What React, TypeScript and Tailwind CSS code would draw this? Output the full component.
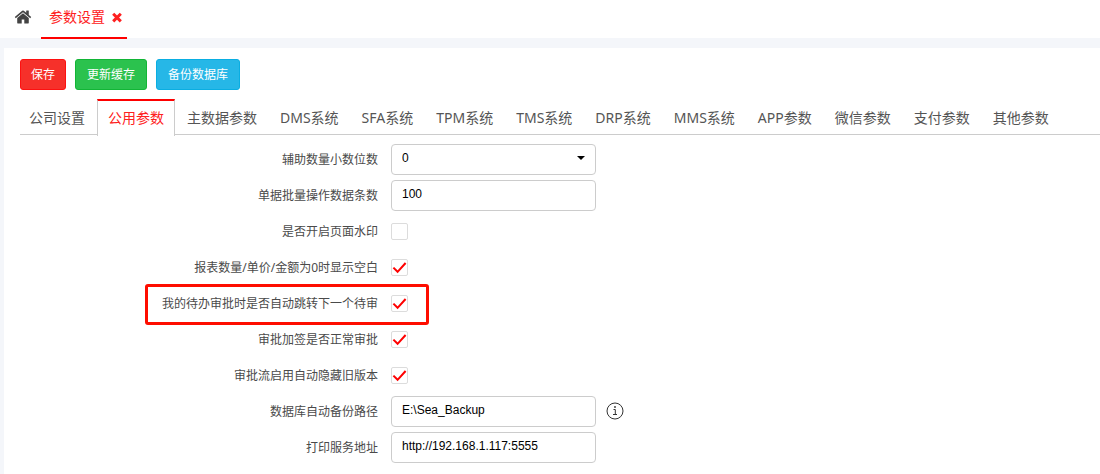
import { useState } from "react";
import type { ReactNode } from "react";

const tabs = [
  "公司设置",
  "公用参数",
  "主数据参数",
  "DMS系统",
  "SFA系统",
  "TPM系统",
  "TMS系统",
  "DRP系统",
  "MMS系统",
  "APP参数",
  "微信参数",
  "支付参数",
  "其他参数",
];

const switches = [
  { id: "watermark", label: "是否开启页面水印", checked: false },
  { id: "blank-zero", label: "报表数量/单价/金额为0时显示空白", checked: true },
  { id: "auto-next", label: "我的待办审批时是否自动跳转下一个待审", checked: true, highlight: true },
  { id: "countersign", label: "审批加签是否正常审批", checked: true },
  { id: "hide-old", label: "审批流启用自动隐藏旧版本", checked: true },
];

const fieldClass =
  "h-[31px] w-[205px] appearance-none rounded-[4px] border border-[#ccc] bg-white pl-[10px] pr-6 pb-[3px] font-['Liberation_Sans',Arial,sans-serif] text-xs text-black outline-none focus:border-[#fe0000]";

const HomeIcon = () => (
  <svg className="h-[18px] w-[18px]" viewBox="0 0 1792 1792" fill="currentColor" aria-hidden="true">
    <path d="M1472 992v480q0 26-19 45t-45 19h-384v-384h-256v384h-384q-26 0-45-19t-19-45v-480q0-1 .5-3t.5-3l575-474 575 474q1 2 1 6zm223-69l-62 74q-8 9-21 11h-3q-13 0-21-7l-692-577-692 577q-12 8-24 7-13-2-21-11l-62-74q-8-10-7-23.5t11-21.5l719-599q32-26 76-26t76 26l244 204v-195q0-14 9-23t23-9h192q14 0 23 9t9 23v408l219 182q10 8 11 21.5t-7 23.5z" />
  </svg>
);

const CloseIcon = () => (
  <svg className="h-[14px] w-[14px]" viewBox="0 0 14 14" fill="none" stroke="currentColor" strokeWidth="3" aria-hidden="true">
    <path d="M3.2 3.8l7.6 7.6M10.8 3.8l-7.6 7.6" />
  </svg>
);

const InfoIcon = () => (
  <svg className="h-[18px] w-[18px]" viewBox="0 0 18 18" fill="none" stroke="currentColor" aria-hidden="true">
    <circle cx="9" cy="9" r="8" />
    <path d="M7.5 7.5H9.3V12.5M7 12.5h4" />
    <circle cx="9" cy="5" r=".9" fill="currentColor" stroke="none" />
  </svg>
);

type RowProps = {
  id: string;
  label: string;
  highlight?: boolean;
  children: ReactNode;
};

const Row = ({ id, label, highlight, children }: RowProps) => (
  <div className="relative flex h-9 items-center">
    <label htmlFor={id} className="mr-[13px] w-[358px] shrink-0 pt-px text-right text-xs text-[#4a4a4a]">
      {label}
    </label>
    {children}
    {highlight && (
      <span className="pointer-events-none absolute -top-px left-[125px] h-[41px] w-[284px] rounded-[3px] border-[3px] border-[#fe0d00]"></span>
    )}
  </div>
);

const Checkbox = ({ id, checked }: { id: string; checked: boolean }) => (
  <span className="relative flex">
    <input
      id={id}
      type="checkbox"
      defaultChecked={checked}
      className="peer h-[17px] w-[17px] appearance-none rounded-[2px] border border-[#dcdcdc] bg-white"
    />
    <svg
      className="pointer-events-none invisible absolute inset-0 h-[17px] w-[17px] text-[#fe0000] peer-checked:visible"
      viewBox="0 0 17 17"
      fill="none"
      stroke="currentColor"
      strokeWidth="2"
      aria-hidden="true"
    >
      <path d="M2.4 8.6L6.6 12.8L14.6 4" />
    </svg>
  </span>
);

const App = () => {
  const [activeTab, setActiveTab] = useState("公用参数");

  return (
    <div className="flex min-h-screen flex-col bg-[#f4f6fa] font-['Noto_Sans','Noto_Sans_CJK_SC',sans-serif]">
      {/* Open pages */}
      <header className="flex h-[38px] items-start bg-white pl-[14px]">
        <button aria-label="首页" className="flex h-[34px] items-center text-[#444]">
          <HomeIcon />
        </button>
        <div className="ml-[9px] flex h-[39px] items-center gap-[5px] border-b-2 border-[#fe0000] pr-[3px] pb-1 pl-2 text-sm text-[#fe2020]">
          <a href="#settings">参数设置</a>
          <button aria-label="关闭">
            <CloseIcon />
          </button>
        </div>
      </header>

      <main className="mt-[10px] ml-1 flex-1 bg-white pt-[11px] pl-4">
        {/* Actions */}
        <div className="flex gap-[9px] text-xs text-white">
          <button className="h-[31px] rounded-[3px] border border-[#fe1010] bg-[#f6302a] px-[10px]">保存</button>
          <button className="h-[31px] rounded-[3px] border border-[#12b536] bg-[#2bc24e] px-[11px]">更新缓存</button>
          <button className="h-[31px] rounded-[3px] border border-[#0aaee2] bg-[#26b7e7] px-[11px]">备份数据库</button>
        </div>

        <nav className="mt-[9px] border-b border-[#ccc]">
          <div className="-ml-0.5 flex h-[35px] gap-px">
            {tabs.map((tab) => (
              <button
                key={tab}
                onClick={() => setActiveTab(tab)}
                className={`shrink-0 border-x border-t-2 px-[10px] text-sm whitespace-nowrap ${
                  tab === activeTab
                    ? "-mb-[2px] border-x-[#ccc] border-t-[#fe0000] bg-white pb-[2px] text-[#fe2020]"
                    : "border-transparent text-[#555]"
                }`}
              >
                {tab}
              </button>
            ))}
          </div>
        </nav>

        <form className="pt-[6px]">
          <Row id="decimals" label="辅助数量小数位数">
            <span className="relative flex">
              <select id="decimals" defaultValue="0" className={fieldClass}>
                <option>0</option>
                <option>1</option>
                <option>2</option>
              </select>
              <span className="pointer-events-none absolute top-3 right-[11px] border-x-4 border-t-4 border-x-transparent border-t-black"></span>
            </span>
          </Row>
          <Row id="batch" label="单据批量操作数据条数">
            <input id="batch" type="text" defaultValue="100" className={fieldClass} />
          </Row>
          {switches.map((item) => (
            <Row key={item.id} id={item.id} label={item.label} highlight={item.highlight}>
              <Checkbox id={item.id} checked={item.checked} />
            </Row>
          ))}
          <Row id="backup" label="数据库自动备份路径">
            <input id="backup" type="text" defaultValue="E:\Sea_Backup" className={fieldClass} />
            <span className="ml-[10px] text-[#333]">
              <InfoIcon />
            </span>
          </Row>
          <Row id="print" label="打印服务地址">
            <input id="print" type="text" defaultValue="http://192.168.1.117:5555" className={fieldClass} />
          </Row>
        </form>
      </main>
    </div>
  );
};

export default App;
